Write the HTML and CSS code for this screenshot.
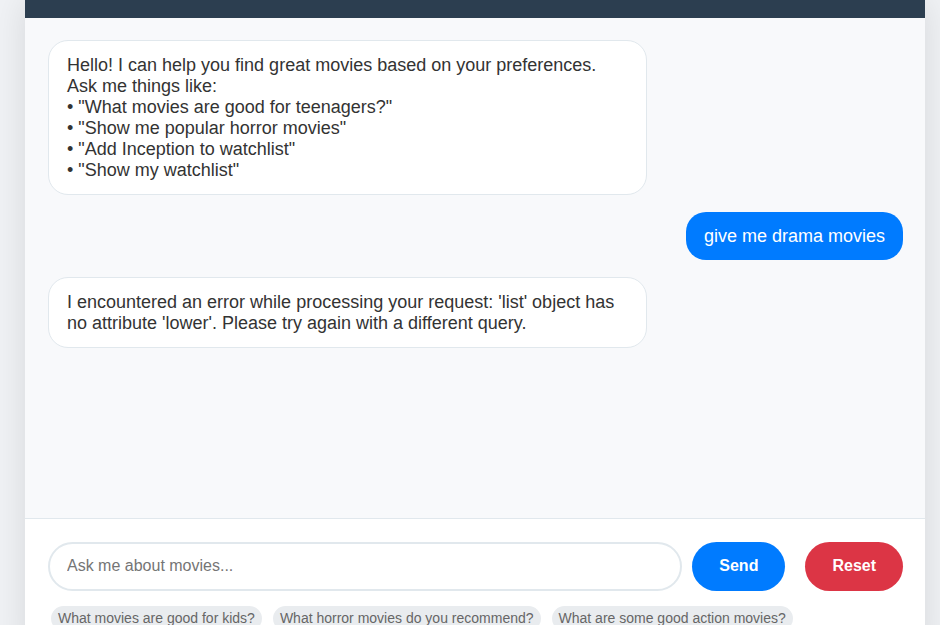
FILE: index.html
```html
<!DOCTYPE html>
<html lang="en">
<head>
<meta charset="utf-8">
<meta name="viewport" content="width=device-width, initial-scale=1">
<title>Movie chat</title>
<link rel="stylesheet" href="styles.css">
</head>
<body>
<div class="chat">
  <header class="chat-header"></header>
  <main class="messages">
    <div class="message bot">Hello! I can help you find great movies based on your preferences.<br>Ask me things like:<br>• "What movies are good for teenagers?"<br>• "Show me popular horror movies"<br>• "Add Inception to watchlist"<br>• "Show my watchlist"</div>
    <div class="message user">give me drama movies</div>
    <div class="message bot">I encountered an error while processing your request: 'list' object has no attribute 'lower'. Please try again with a different query.</div>
  </main>
  <footer class="composer">
    <form class="composer-row">
      <input class="query" type="text" placeholder="Ask me about movies..." aria-label="Ask me about movies">
      <button class="button send" type="button">Send</button>
      <button class="button reset" type="button">Reset</button>
    </form>
    <div class="suggestions">
      <button class="chip" type="button">What movies are good for kids?</button>
      <button class="chip" type="button">What horror movies do you recommend?</button>
      <button class="chip" type="button">What are some good action movies?</button>
    </div>
  </footer>
</div>
</body>
</html>
```
FILE: styles.css
```css
* {
  box-sizing: border-box;
}

body {
  margin: 0;
  height: 100vh;
  padding: 0 15px 0 25px;
  overflow: hidden;
  background: #f0f2f5;
  color: #333;
  font-family: "Liberation Sans", Arial, sans-serif;
}

.chat {
  background: #fff;
  box-shadow: 0 0 34px rgba(0, 0, 0, 0.11);
}

.chat-header {
  height: 18px;
  background: #2c3e50;
}

.messages {
  display: flex;
  flex-direction: column;
  gap: 17px;
  height: 500px;
  padding: 22px 22px 22px 23px;
  background: #f8f9fb;
}

.message {
  max-width: 70%;
  padding: 14px 18px 13px;
  border-radius: 20px;
  font-size: 18px;
  line-height: 21px;
}

.bot {
  align-self: flex-start;
  width: 70%;
  border: 1px solid #e1e8ed;
  background: #fff;
}

.user {
  align-self: flex-end;
  background: #007bff;
  color: #fff;
}

.composer {
  padding: 23px 22px 23px 23px;
  border-top: 1px solid #e1e8ed;
}

.composer-row {
  display: flex;
  gap: 10px;
}

.query {
  flex: 1;
  min-width: 0;
  height: 49px;
  padding: 0 17px 2px;
  border: 2px solid #e1e8ed;
  border-radius: 25px;
  background: #fff;
  color: #333;
  font-family: inherit;
  font-size: 16px;
}

.query::placeholder {
  color: #757575;
}

.button {
  height: 49px;
  padding: 0 27px 2px;
  border: 0;
  border-radius: 25px;
  color: #fff;
  font-family: inherit;
  font-size: 16px;
  font-weight: bold;
}

.send {
  background: #007bff;
}

.reset {
  margin-left: 10px;
  background: #dc3545;
}

.suggestions {
  display: flex;
  flex-wrap: wrap;
  gap: 11px;
  padding: 15px 3px 0;
}

.chip {
  padding: 4px 7px;
  border: 0;
  border-radius: 14px;
  background: #e9ecef;
  color: #666;
  font-family: inherit;
  font-size: 14px;
  line-height: 17px;
}
```
